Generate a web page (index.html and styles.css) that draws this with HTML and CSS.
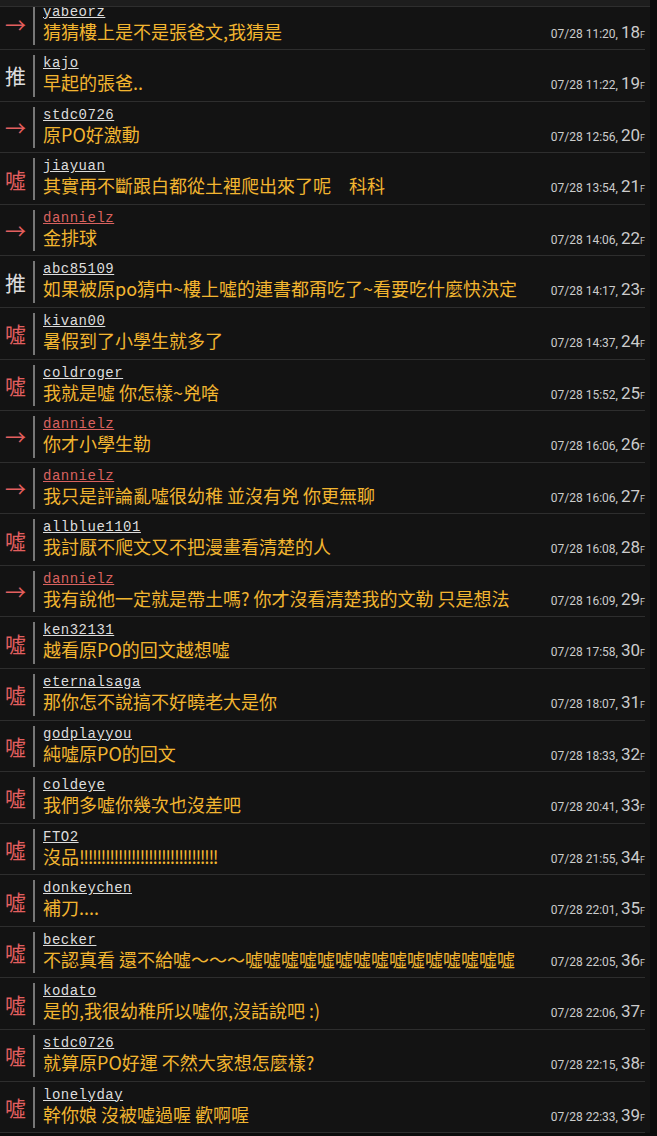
FILE: index.html
```html
<!DOCTYPE html>
<html lang="zh-Hant">
<head>
    <meta charset="UTF-8">
    <title>推文</title>
    <link rel="stylesheet" href="styles.css">
</head>
<body>
<div class="topbar"></div>
<div class="list">
    <div class="row">
        <div class="tag red">→</div><div class="bar"></div>
        <div class="body"><div class="user">yabeorz</div><div class="text">猜猜樓上是不是張爸文,我猜是</div></div>
        <div class="time">07/28 11:20, <b>18</b><i>F</i></div>
    </div>
    <div class="row">
        <div class="tag">推</div><div class="bar"></div>
        <div class="body"><div class="user">kajo</div><div class="text">早起的張爸..</div></div>
        <div class="time">07/28 11:22, <b>19</b><i>F</i></div>
    </div>
    <div class="row">
        <div class="tag red">→</div><div class="bar"></div>
        <div class="body"><div class="user">stdc0726</div><div class="text">原PO好激動</div></div>
        <div class="time">07/28 12:56, <b>20</b><i>F</i></div>
    </div>
    <div class="row">
        <div class="tag red">噓</div><div class="bar"></div>
        <div class="body"><div class="user">jiayuan</div><div class="text">其實再不斷跟白都從土裡爬出來了呢　科科</div></div>
        <div class="time">07/28 13:54, <b>21</b><i>F</i></div>
    </div>
    <div class="row">
        <div class="tag red">→</div><div class="bar"></div>
        <div class="body"><div class="user op">dannielz</div><div class="text">金排球</div></div>
        <div class="time">07/28 14:06, <b>22</b><i>F</i></div>
    </div>
    <div class="row">
        <div class="tag">推</div><div class="bar"></div>
        <div class="body"><div class="user">abc85109</div><div class="text">如果被原po猜中~樓上噓的連書都甭吃了~看要吃什麼快決定</div></div>
        <div class="time">07/28 14:17, <b>23</b><i>F</i></div>
    </div>
    <div class="row">
        <div class="tag red">噓</div><div class="bar"></div>
        <div class="body"><div class="user">kivan00</div><div class="text">暑假到了小學生就多了</div></div>
        <div class="time">07/28 14:37, <b>24</b><i>F</i></div>
    </div>
    <div class="row">
        <div class="tag red">噓</div><div class="bar"></div>
        <div class="body"><div class="user">coldroger</div><div class="text">我就是噓 你怎樣~兇啥</div></div>
        <div class="time">07/28 15:52, <b>25</b><i>F</i></div>
    </div>
    <div class="row">
        <div class="tag red">→</div><div class="bar"></div>
        <div class="body"><div class="user op">dannielz</div><div class="text">你才小學生勒</div></div>
        <div class="time">07/28 16:06, <b>26</b><i>F</i></div>
    </div>
    <div class="row">
        <div class="tag red">→</div><div class="bar"></div>
        <div class="body"><div class="user op">dannielz</div><div class="text">我只是評論亂噓很幼稚 並沒有兇 你更無聊</div></div>
        <div class="time">07/28 16:06, <b>27</b><i>F</i></div>
    </div>
    <div class="row">
        <div class="tag red">噓</div><div class="bar"></div>
        <div class="body"><div class="user">allblue1101</div><div class="text">我討厭不爬文又不把漫畫看清楚的人</div></div>
        <div class="time">07/28 16:08, <b>28</b><i>F</i></div>
    </div>
    <div class="row">
        <div class="tag red">→</div><div class="bar"></div>
        <div class="body"><div class="user op">dannielz</div><div class="text">我有說他一定就是帶土嗎? 你才沒看清楚我的文勒 只是想法</div></div>
        <div class="time">07/28 16:09, <b>29</b><i>F</i></div>
    </div>
    <div class="row">
        <div class="tag red">噓</div><div class="bar"></div>
        <div class="body"><div class="user">ken32131</div><div class="text">越看原PO的回文越想噓</div></div>
        <div class="time">07/28 17:58, <b>30</b><i>F</i></div>
    </div>
    <div class="row">
        <div class="tag red">噓</div><div class="bar"></div>
        <div class="body"><div class="user">eternalsaga</div><div class="text">那你怎不說搞不好曉老大是你</div></div>
        <div class="time">07/28 18:07, <b>31</b><i>F</i></div>
    </div>
    <div class="row">
        <div class="tag red">噓</div><div class="bar"></div>
        <div class="body"><div class="user">godplayyou</div><div class="text">純噓原PO的回文</div></div>
        <div class="time">07/28 18:33, <b>32</b><i>F</i></div>
    </div>
    <div class="row">
        <div class="tag red">噓</div><div class="bar"></div>
        <div class="body"><div class="user">coldeye</div><div class="text">我們多噓你幾次也沒差吧</div></div>
        <div class="time">07/28 20:41, <b>33</b><i>F</i></div>
    </div>
    <div class="row">
        <div class="tag red">噓</div><div class="bar"></div>
        <div class="body"><div class="user">FTO2</div><div class="text">沒品<span class="bang">!!!!!!!!!!!!!!!!!!!!!!!!!!!!!!!!</span></div></div>
        <div class="time">07/28 21:55, <b>34</b><i>F</i></div>
    </div>
    <div class="row">
        <div class="tag red">噓</div><div class="bar"></div>
        <div class="body"><div class="user">donkeychen</div><div class="text">補刀....</div></div>
        <div class="time">07/28 22:01, <b>35</b><i>F</i></div>
    </div>
    <div class="row">
        <div class="tag red">噓</div><div class="bar"></div>
        <div class="body"><div class="user">becker</div><div class="text">不認真看 還不給噓～～～噓噓噓噓噓噓噓噓噓噓噓噓噓噓噓</div></div>
        <div class="time">07/28 22:05, <b>36</b><i>F</i></div>
    </div>
    <div class="row">
        <div class="tag red">噓</div><div class="bar"></div>
        <div class="body"><div class="user">kodato</div><div class="text">是的,我很幼稚所以噓你,沒話說吧 :)</div></div>
        <div class="time">07/28 22:06, <b>37</b><i>F</i></div>
    </div>
    <div class="row">
        <div class="tag red">噓</div><div class="bar"></div>
        <div class="body"><div class="user">stdc0726</div><div class="text">就算原PO好運 不然大家想怎麼樣?</div></div>
        <div class="time">07/28 22:15, <b>38</b><i>F</i></div>
    </div>
    <div class="row">
        <div class="tag red">噓</div><div class="bar"></div>
        <div class="body"><div class="user">lonelyday</div><div class="text">幹你娘 沒被噓過喔 歡啊喔</div></div>
        <div class="time">07/28 22:33, <b>39</b><i>F</i></div>
    </div>
</div>
</body>
</html>
```

FILE: styles.css
```css
* {
    margin: 0;
    padding: 0;
}

html, body {
    background-color: #0b0b0b;
    overflow: hidden;
}

.topbar {
    position: fixed;
    top: 0;
    left: 0;
    width: 650px;
    height: 6px;
    background-color: #1d1d1d;
    border-bottom: 1px solid #2e2e2e;
    z-index: 2;
}

.list {
    width: 650px;
    margin-top: -1.5px;
    background-color: #131313;
}

.row {
    display: flex;
    width: 645px;
    height: 51.58px;
    box-sizing: border-box;
    border-bottom: 1px solid #2e2e2e;
}

.tag {
    width: 31px;
    display: flex;
    align-items: center;
    justify-content: center;
    font-family: "Noto Sans CJK TC", sans-serif;
    font-size: 21px;
    color: #dcdcdc;
}

.tag.red {
    color: #e25f5f;
}

.bar {
    width: 2px;
    background-color: #777777;
    margin: 5px 0 4px 2px;
}

.body {
    flex: 1;
    padding: 5px 0 0 8px;
    min-width: 0;
    white-space: nowrap;
}

.user {
    font-family: "Liberation Mono", monospace;
    font-size: 14px;
    line-height: 17px;
    letter-spacing: 0.5px;
    color: #dddddd;
    text-decoration: underline;
}

.user.op {
    color: #d9625f;
}

.text {
    font-family: "Noto Sans CJK TC", sans-serif;
    font-size: 18px;
    line-height: 21px;
    color: #f2b530;
}

.bang {
    letter-spacing: -1.5px;
}

.time {
    padding-top: 22px;
    font-family: Roboto, "Liberation Sans", sans-serif;
    font-size: 12px;
    line-height: 22px;
    color: #cccccc;
    white-space: nowrap;
}

.time b {
    font-weight: normal;
    font-size: 17px;
}

.time i {
    font-style: normal;
    font-size: 9px;
}
```
